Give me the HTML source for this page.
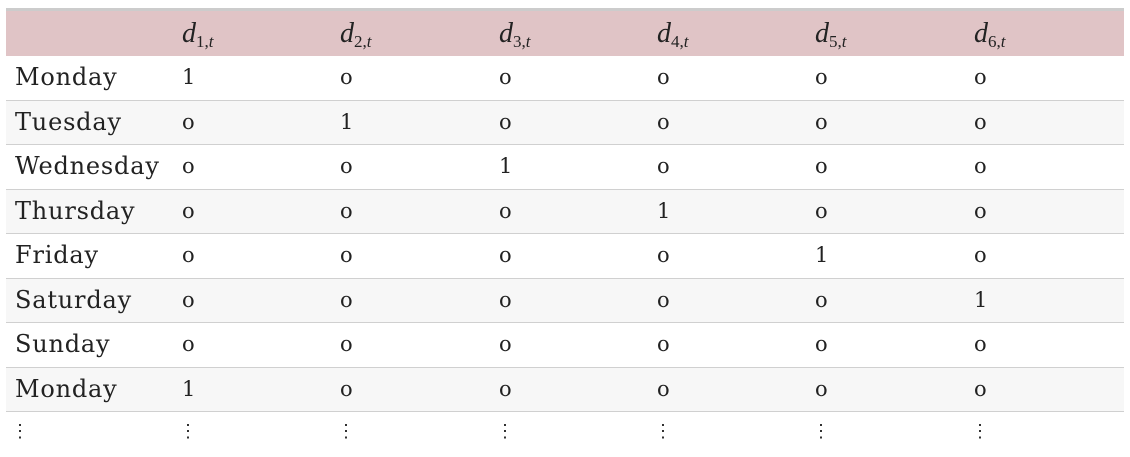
<!DOCTYPE html>
<html><head><style>
body{margin:0;background:#fff;width:1130px;height:455px;overflow:hidden;font-family:"DejaVu Serif","Liberation Serif",serif;color:#222}
.t{position:absolute;left:6px;top:8px;width:1118px;border-top:3px solid #ccc}
.r{position:relative;height:44.5px;border-bottom:1px solid #d0d0d0;box-sizing:border-box}
.h{background:#e0c4c6;height:45px;border:none}
.g{background:#f7f7f7}
.c{position:absolute;top:0;line-height:43px;font-size:24px;letter-spacing:0.8px}
.n{font-size:21px;letter-spacing:0}
.m{font-family:"Liberation Serif",serif;font-style:italic;font-size:28px;line-height:46px;letter-spacing:0}
.m sub{font-style:normal;font-size:17px;vertical-align:-5px}
.m sub i{font-style:italic}
.d{font-size:18px;line-height:40px;letter-spacing:0}
</style></head><body>
<div class="t">
<div class="r h">
<span class="c m" style="left:176px">d<sub>1,<i>t</i></sub></span>
<span class="c m" style="left:334px">d<sub>2,<i>t</i></sub></span>
<span class="c m" style="left:493px">d<sub>3,<i>t</i></sub></span>
<span class="c m" style="left:651px">d<sub>4,<i>t</i></sub></span>
<span class="c m" style="left:809px">d<sub>5,<i>t</i></sub></span>
<span class="c m" style="left:968px">d<sub>6,<i>t</i></sub></span>
</div>
<div id="rows"></div>
</div>
<script>
var days=["Monday","Tuesday","Wednesday","Thursday","Friday","Saturday","Sunday","Monday"];
var xs=[176,334,493,651,809,968];var h="";
days.forEach(function(d,i){var one=i<6?i:(i==7?0:-1);
h+='<div class="r'+(i%2?' g':'')+'"><span class="c" style="left:9px">'+d+'</span>';
xs.forEach(function(x,j){h+='<span class="c n" style="left:'+x+'px">'+(j==one?'1':'o')+'</span>';});
h+='</div>';});
h+='<div class="r" style="border:none"><span class="c d" style="left:5px">⋮</span>';
xs.forEach(function(x){h+='<span class="c d" style="left:'+(x-3)+'px">⋮</span>';});
h+='</div>';
document.getElementById("rows").innerHTML=h;
</script>
</body></html>
